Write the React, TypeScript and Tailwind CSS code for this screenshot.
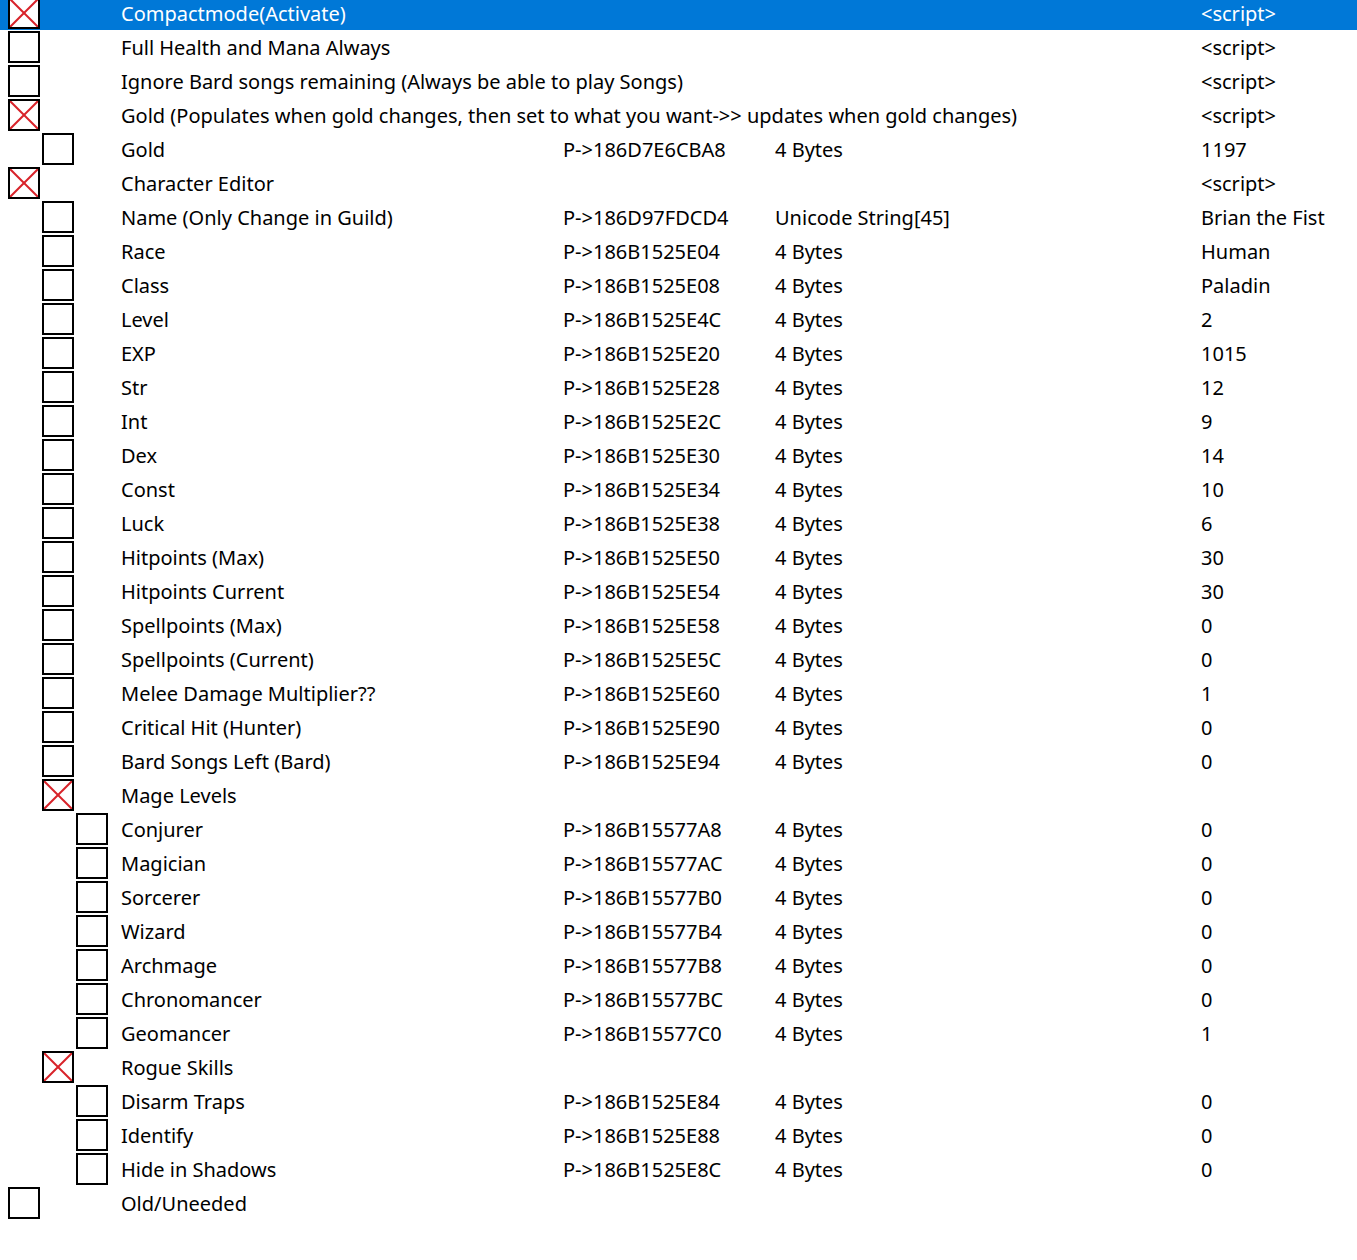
import React from "react";

type Row = {
  level: number;
  checked?: boolean;
  desc: string;
  addr?: string;
  type?: string;
  value?: string;
  selected?: boolean;
};

const b = "4 Bytes";

const rows: Row[] = [
  { level: 0, checked: true, desc: "Compactmode(Activate)", value: "<script>", selected: true },
  { level: 0, desc: "Full Health and Mana Always", value: "<script>" },
  { level: 0, desc: "Ignore Bard songs remaining (Always be able to play Songs)", value: "<script>" },
  {
    level: 0,
    checked: true,
    desc: "Gold (Populates when gold changes, then set to what you want->> updates when gold changes)",
    value: "<script>",
  },
  { level: 1, desc: "Gold", addr: "P->186D7E6CBA8", type: b, value: "1197" },
  { level: 0, checked: true, desc: "Character Editor", value: "<script>" },
  { level: 1, desc: "Name (Only Change in Guild)", addr: "P->186D97FDCD4", type: "Unicode String[45]", value: "Brian the Fist" },
  { level: 1, desc: "Race", addr: "P->186B1525E04", type: b, value: "Human" },
  { level: 1, desc: "Class", addr: "P->186B1525E08", type: b, value: "Paladin" },
  { level: 1, desc: "Level", addr: "P->186B1525E4C", type: b, value: "2" },
  { level: 1, desc: "EXP", addr: "P->186B1525E20", type: b, value: "1015" },
  { level: 1, desc: "Str", addr: "P->186B1525E28", type: b, value: "12" },
  { level: 1, desc: "Int", addr: "P->186B1525E2C", type: b, value: "9" },
  { level: 1, desc: "Dex", addr: "P->186B1525E30", type: b, value: "14" },
  { level: 1, desc: "Const", addr: "P->186B1525E34", type: b, value: "10" },
  { level: 1, desc: "Luck", addr: "P->186B1525E38", type: b, value: "6" },
  { level: 1, desc: "Hitpoints (Max)", addr: "P->186B1525E50", type: b, value: "30" },
  { level: 1, desc: "Hitpoints Current", addr: "P->186B1525E54", type: b, value: "30" },
  { level: 1, desc: "Spellpoints (Max)", addr: "P->186B1525E58", type: b, value: "0" },
  { level: 1, desc: "Spellpoints (Current)", addr: "P->186B1525E5C", type: b, value: "0" },
  { level: 1, desc: "Melee Damage Multiplier??", addr: "P->186B1525E60", type: b, value: "1" },
  { level: 1, desc: "Critical Hit (Hunter)", addr: "P->186B1525E90", type: b, value: "0" },
  { level: 1, desc: "Bard Songs Left (Bard)", addr: "P->186B1525E94", type: b, value: "0" },
  { level: 1, checked: true, desc: "Mage Levels" },
  { level: 2, desc: "Conjurer", addr: "P->186B15577A8", type: b, value: "0" },
  { level: 2, desc: "Magician", addr: "P->186B15577AC", type: b, value: "0" },
  { level: 2, desc: "Sorcerer", addr: "P->186B15577B0", type: b, value: "0" },
  { level: 2, desc: "Wizard", addr: "P->186B15577B4", type: b, value: "0" },
  { level: 2, desc: "Archmage", addr: "P->186B15577B8", type: b, value: "0" },
  { level: 2, desc: "Chronomancer", addr: "P->186B15577BC", type: b, value: "0" },
  { level: 2, desc: "Geomancer", addr: "P->186B15577C0", type: b, value: "1" },
  { level: 1, checked: true, desc: "Rogue Skills" },
  { level: 2, desc: "Disarm Traps", addr: "P->186B1525E84", type: b, value: "0" },
  { level: 2, desc: "Identify", addr: "P->186B1525E88", type: b, value: "0" },
  { level: 2, desc: "Hide in Shadows", addr: "P->186B1525E8C", type: b, value: "0" },
  { level: 0, desc: "Old/Uneeded" },
];

const indent = ["pl-2", "pl-[42px]", "pl-[76px]"];

const CheckBox = ({ checked }: { checked?: boolean }) => (
  <div className="w-8 h-8 border-2 border-black bg-white shrink-0">
    {checked && (
      <svg viewBox="0 0 28 28" className="w-full h-full block">
        <line x1="0" y1="0" x2="28" y2="28" stroke="#d8232a" strokeWidth="2" />
        <line x1="28" y1="0" x2="0" y2="28" stroke="#d8232a" strokeWidth="2" />
      </svg>
    )}
  </div>
);

const App = () => {
  return (
    <div
      className="w-[1357px] h-[1260px] bg-white overflow-hidden text-[20px] text-black"
      style={{ fontFamily: '"Noto Sans", "Open Sans", sans-serif' }}
    >
      <div className="-mt-1">
        {rows.map((row, idx) => (
          <div
            key={idx}
            className={`flex items-center h-[34px] whitespace-nowrap ${
              row.selected ? "bg-[#0078d7] text-white" : ""
            }`}
          >
            <div className={`w-[121px] shrink-0 flex ${indent[row.level]}`}>
              <CheckBox checked={row.checked} />
            </div>
            <div className="flex items-center pt-[2px]">
              <div className="w-[442px] shrink-0">{row.desc}</div>
              <div className="w-[212px] shrink-0">{row.addr}</div>
              <div className="w-[426px] shrink-0">{row.type}</div>
              <div className="flex-1">{row.value}</div>
            </div>
          </div>
        ))}
      </div>
    </div>
  );
};

export default App;
